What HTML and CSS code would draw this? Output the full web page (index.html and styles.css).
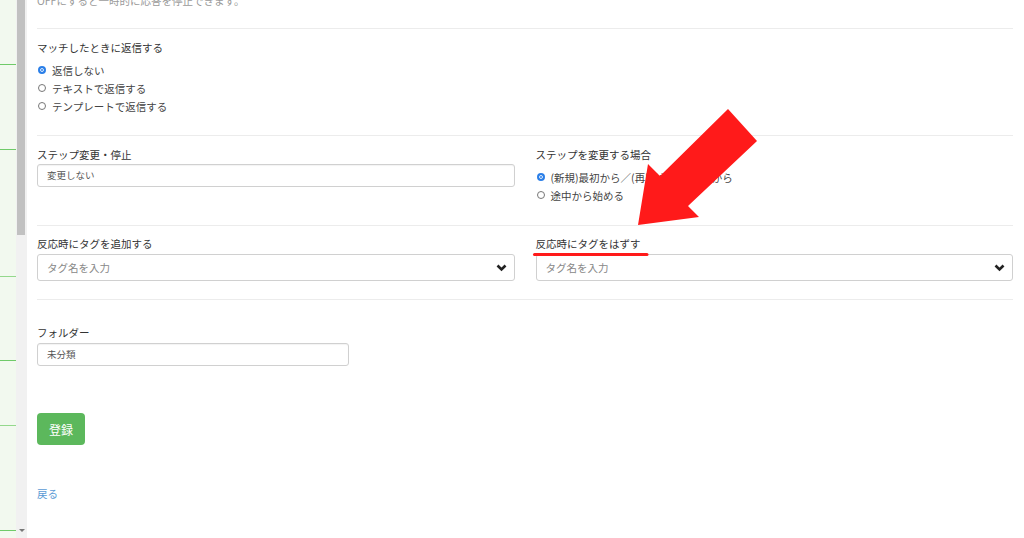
FILE: index.html
```html
<!DOCTYPE html>
<html>
  <head>
    <meta charset="utf-8">
    <link rel="stylesheet" href="styles.css">
    <title>応答設定</title>
  </head>
  <body>
    <div class="sidebar">
      <div class="nav-item h65"></div>
      <div class="nav-item h85"></div>
      <div class="nav-item h127 soft"></div>
      <div class="nav-item h84"></div>
      <div class="nav-item h65 soft"></div>
      <div class="nav-item h105"></div>
    </div>
    <div class="scrollbar">
      <div class="thumb"></div>
      <div class="scroll-down"></div>
    </div>

    <div class="main">
      <div class="section first">
        <p class="note">OFFにすると一時的に応答を停止できます。</p>
      </div>

      <div class="section s-reply">
        <div class="label">マッチしたときに返信する</div>
        <label class="radio"><span class="dot checked"></span>返信しない</label>
        <label class="radio"><span class="dot"></span>テキストで返信する</label>
        <label class="radio"><span class="dot"></span>テンプレートで返信する</label>
      </div>

      <div class="section s-step cols">
        <div class="col">
          <div class="label">ステップ変更・停止</div>
          <div class="input">変更しない</div>
        </div>
        <div class="col">
          <div class="label">ステップを変更する場合</div>
          <div class="radios">
            <label class="radio"><span class="dot checked"></span>(新規)最初から／(再開)前回の続きから</label>
            <label class="radio"><span class="dot"></span>途中から始める</label>
          </div>
        </div>
      </div>

      <div class="section s-tags cols">
        <div class="col">
          <div class="label">反応時にタグを追加する</div>
          <div class="select">
            <span class="placeholder">タグ名を入力</span>
            <svg class="chevron" width="11" height="8" viewBox="0 0 11 8"><path d="M1.5 1.5 L5.5 5.5 L9.5 1.5" fill="none" stroke="#222" stroke-width="2.6"/></svg>
          </div>
        </div>
        <div class="col">
          <div class="label">反応時にタグをはずす</div>
          <div class="select">
            <span class="placeholder">タグ名を入力</span>
            <svg class="chevron" width="11" height="8" viewBox="0 0 11 8"><path d="M1.5 1.5 L5.5 5.5 L9.5 1.5" fill="none" stroke="#222" stroke-width="2.6"/></svg>
          </div>
        </div>
      </div>

      <div class="section s-folder">
        <div class="label">フォルダー</div>
        <div class="input folder">未分類</div>
        <button class="btn-save">登録</button>
        <a class="back" href="#">戻る</a>
      </div>
    </div>

    <!-- 注釈（赤い矢印と下線） -->
    <svg class="annotation" width="1024" height="538" viewBox="0 0 1024 538">
      <polygon points="638,225 648,164 660,176 728,109 757,141 688,206 699,217" fill="#ff1a1a"/>
      <line x1="534.5" y1="254.5" x2="647" y2="254.5" stroke="#ff1a1a" stroke-width="3" stroke-linecap="round"/>
    </svg>
  </body>
</html>
```

FILE: styles.css
```css
html, body {
  margin: 0;
  height: 538px;
  overflow: hidden;
}

body {
  display: flex;
  position: relative;
  font-family: "Noto Sans CJK JP", "Noto Sans", sans-serif;
  font-size: 10.5px;
  color: #333;
  background: #fff;
}

.sidebar {
  width: 16px;
  flex-shrink: 0;
  background: #f2f9ef;
}

.nav-item {
  box-sizing: border-box;
  border-bottom: 1.5px solid #6fca69;
}

.nav-item.soft {
  border-bottom-color: #94d88c;
}

.h65 { height: 65px; }
.h85 { height: 85px; }
.h127 { height: 127px; }
.h84 { height: 84px; }
.h105 { height: 105px; }

.scrollbar {
  width: 11px;
  flex-shrink: 0;
  background: #f1f1f1;
  position: relative;
}

.thumb {
  margin: 0 2px 0 1px;
  height: 235px;
  background: #c1c1c1;
}

.scroll-down {
  position: absolute;
  bottom: 6px;
  left: 3px;
  width: 0;
  height: 0;
  border-left: 3px solid transparent;
  border-right: 3px solid transparent;
  border-top: 3px solid #777;
}

.main {
  flex: 1;
  padding: 0 11px 0 10px;
}

.section {
  border-bottom: 1px solid #ececec;
}

.section.first {
  margin-top: -6px;
  padding-bottom: 20px;
}

.note {
  margin: 0;
  line-height: 14px;
  color: #9a9a9a;
}

.label {
  line-height: 16px;
  color: #333;
}

.radio {
  display: flex;
  align-items: center;
  height: 18px;
  color: #444;
}

.dot {
  box-sizing: border-box;
  width: 8px;
  height: 8px;
  margin: 0 6px 0 1px;
  border: 1px solid #777;
  border-radius: 50%;
  background: #fff;
}

.dot.checked {
  border: 2px solid #2b7fe8;
  background: #2b7fe8;
  box-shadow: inset 0 0 0 1px #fff;
}

.s-reply {
  padding: 11px 0 20px;
}

.s-reply .label {
  margin-bottom: 5px;
}

.cols {
  display: grid;
  grid-template-columns: 1fr 1fr;
  column-gap: 21px;
}

.s-step {
  padding: 11px 0 21px;
}

.radios {
  margin-top: 5px;
}

.input {
  box-sizing: border-box;
  height: 23px;
  margin-top: 1px;
  padding: 0 9px;
  border: 1px solid #d0d0d0;
  border-radius: 3px;
  box-shadow: inset 0 1px 1px rgba(0, 0, 0, 0.05);
  font-size: 9.5px;
  line-height: 21px;
  color: #555;
}

.s-tags {
  padding: 10px 0 18px;
}

.select {
  box-sizing: border-box;
  height: 27px;
  margin-top: 2px;
  padding: 0 9px;
  border: 1px solid #d0d0d0;
  border-radius: 3px;
  display: flex;
  align-items: center;
  justify-content: space-between;
}

.placeholder {
  color: #888;
  font-size: 10.5px;
}

.chevron {
  margin-right: -2px;
}

.s-folder {
  border-bottom: none;
  padding-top: 25px;
}

.input.folder {
  width: 312px;
  margin-top: 2px;
}

.btn-save {
  display: block;
  margin-top: 47px;
  width: 48px;
  height: 32px;
  border: none;
  border-radius: 4px;
  background: #5cb85c;
  color: #fff;
  font-family: inherit;
  font-size: 12px;
  cursor: pointer;
}

.back {
  display: inline-block;
  margin-top: 41px;
  line-height: 16px;
  color: #5b9bd5;
  text-decoration: none;
}

.annotation {
  position: absolute;
  top: 0;
  left: 0;
  pointer-events: none;
}
```
